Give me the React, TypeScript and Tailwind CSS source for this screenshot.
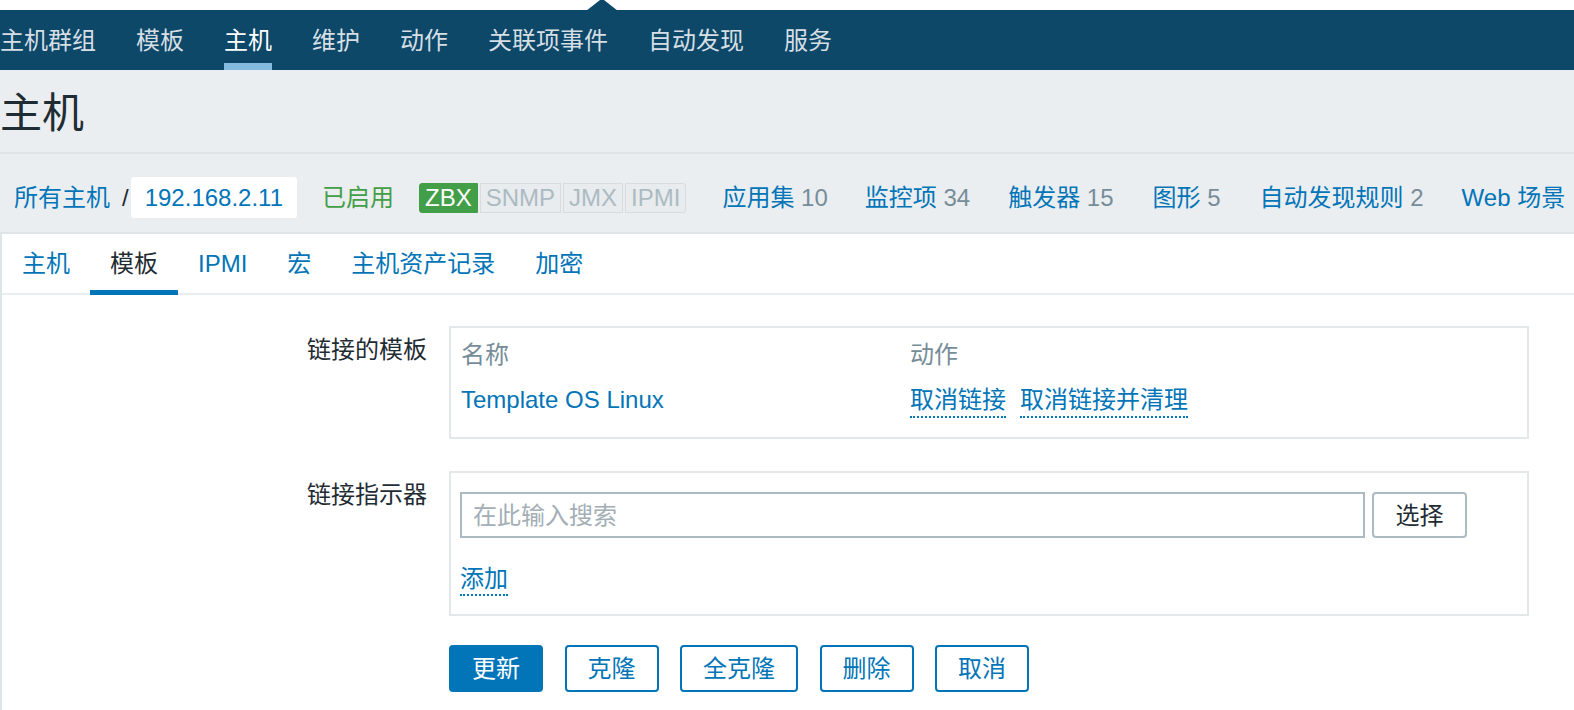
import React from "react";

const navItems = ["主机群组", "模板", "主机", "维护", "动作", "关联项事件", "自动发现", "服务"];
const tabs = ["主机", "模板", "IPMI", "宏", "主机资产记录", "加密"];

function DotLink({ children }: { children: React.ReactNode }) {
  return (
    <span className="text-[#0275b8] border-b-2 border-dotted border-[#0275b8] pb-[3px]">{children}</span>
  );
}

export default function App() {
  return (
    <div className="relative w-[1574px] h-[710px] overflow-hidden bg-[#ebeef0] text-[24px] leading-[27px] text-[#1f2c33] font-['Liberation_Sans','Noto_Sans_CJK_SC',sans-serif]">
      {/* top white strip */}
      <div className="h-[10px] bg-white" />
      <svg className="absolute left-[586px] top-0" width="32" height="11" viewBox="0 0 32 11">
        <polygon points="0,11 14,0 18,0 32,11" fill="#0d4868" />
      </svg>
      {/* top nav */}
      <div className="h-[60px] bg-[#0d4868] flex items-stretch gap-[40px]">
        {navItems.map((n, i) => (
          <div key={i} className={`relative flex items-center ${i === 2 ? "text-white" : "text-[#d6dfe5]"}`}>
            {n}
            {i === 2 && <div className="absolute left-0 right-0 bottom-0 h-[7px] bg-[#86bbe0]" />}
          </div>
        ))}
      </div>
      {/* title */}
      <div className="h-[82px] flex items-center pt-[6px]">
        <h1 className="text-[42px] leading-[48px] text-[#1f2c33]">主机</h1>
      </div>
      {/* breadcrumb row */}
      <div className="h-[82px] border-y-2 border-[#dfe4e7] flex items-center pt-[9px]">
        <span className="ml-[14px] text-[#0275b8]">所有主机</span>
        <span className="ml-[12px]">/</span>
        <span className="ml-[2px] h-[41px] px-[14px] bg-white rounded-[3px] flex items-center text-[#0275b8]">192.168.2.11</span>
        <span className="ml-[25px] text-[#429e47]">已启用</span>
        <div className="ml-[25px] flex gap-[2px]">
          <span className="h-[30px] leading-[28px] px-[5px] border border-[#429e47] bg-[#429e47] text-white rounded-l-[3px]">ZBX</span>
          <span className="h-[30px] leading-[28px] px-[5px] border border-[#d5dde1] bg-[#e8ecee] text-[#acbbc2]">SNMP</span>
          <span className="h-[30px] leading-[28px] px-[5px] border border-[#d5dde1] bg-[#e8ecee] text-[#acbbc2]">JMX</span>
          <span className="h-[30px] leading-[28px] px-[5px] border border-[#d5dde1] bg-[#e8ecee] text-[#acbbc2] rounded-r-[3px]">IPMI</span>
        </div>
        <span className="ml-[36px] text-[#0275b8] whitespace-nowrap">应用集 <span className="text-[#768d99]">10</span></span>
        <span className="ml-[37px] text-[#0275b8] whitespace-nowrap">监控项 <span className="text-[#768d99]">34</span></span>
        <span className="ml-[38px] text-[#0275b8] whitespace-nowrap">触发器 <span className="text-[#768d99]">15</span></span>
        <span className="ml-[39px] text-[#0275b8] whitespace-nowrap">图形 <span className="text-[#768d99]">5</span></span>
        <span className="ml-[39px] text-[#0275b8] whitespace-nowrap">自动发现规则 <span className="text-[#768d99]">2</span></span>
        <span className="ml-[38px] text-[#0275b8] whitespace-nowrap">Web 场景</span>
      </div>
      {/* content */}
      <div className="bg-white border-l-2 border-[#dfe4e7] h-[480px]">
        <div className="h-[61px] border-b-2 border-[#ebeef0] flex">
          {tabs.map((t, i) => (
            <div key={i} className={`relative px-[20px] flex items-center ${i === 1 ? "text-[#1f2c33]" : "text-[#0275b8]"}`}>
              {t}
              {i === 1 && <div className="absolute left-0 right-0 bottom-[-2px] h-[5px] bg-[#0275b8]" />}
            </div>
          ))}
        </div>
        <div className="pt-[31px]">
          {/* row 1 */}
          <div className="flex">
            <div className="w-[425px] text-right pt-[10px]">链接的模板</div>
            <div className="ml-[22px] w-[1080px] border-2 border-[#e4e8eb] px-[10px] pt-[8px] pb-[11px]">
              <div className="grid grid-cols-[449px_1fr] h-[36px] items-center text-[#768d99]">
                <span>名称</span>
                <span>动作</span>
              </div>
              <div className="grid grid-cols-[449px_1fr] h-[54px] items-start pt-[14px]">
                <span className="text-[#0275b8]">Template OS Linux</span>
                <div className="flex gap-[14px]">
                  <DotLink>取消链接</DotLink>
                  <DotLink>取消链接并清理</DotLink>
                </div>
              </div>
            </div>
          </div>
          {/* row 2 */}
          <div className="flex mt-[32px]">
            <div className="w-[425px] text-right pt-[10px]">链接指示器</div>
            <div className="ml-[22px] w-[1080px] border-2 border-[#e4e8eb] pl-[9px] pt-[19px] pb-[18px]">
              <div className="flex">
                <div className="w-[905px] h-[46px] border-2 border-[#acbbc2] pl-[11px] flex items-center text-[#a3aeb5]">在此输入搜索</div>
                <div className="ml-[7px] w-[95px] h-[46px] border-2 border-[#acbbc2] rounded-[4px] bg-white flex items-center justify-center text-[#1f2c33]">选择</div>
              </div>
              <div className="mt-[27px] flex">
                <span className="text-[#0275b8] border-b-2 border-dotted border-[#0275b8] pb-[2px]">添加</span>
              </div>
            </div>
          </div>
          {/* buttons */}
          <div className="mt-[29px] ml-[447px] flex gap-[21.5px]">
            <div className="h-[47px] px-[21px] border-2 border-[#0275b8] bg-[#0275b8] text-white rounded-[4px] flex items-center">更新</div>
            <div className="h-[47px] px-[21px] border-2 border-[#0275b8] bg-white text-[#0275b8] rounded-[4px] flex items-center">克隆</div>
            <div className="h-[47px] px-[21px] border-2 border-[#0275b8] bg-white text-[#0275b8] rounded-[4px] flex items-center">全克隆</div>
            <div className="h-[47px] px-[21px] border-2 border-[#0275b8] bg-white text-[#0275b8] rounded-[4px] flex items-center">删除</div>
            <div className="h-[47px] px-[21px] border-2 border-[#0275b8] bg-white text-[#0275b8] rounded-[4px] flex items-center">取消</div>
          </div>
        </div>
      </div>
    </div>
  );
}
